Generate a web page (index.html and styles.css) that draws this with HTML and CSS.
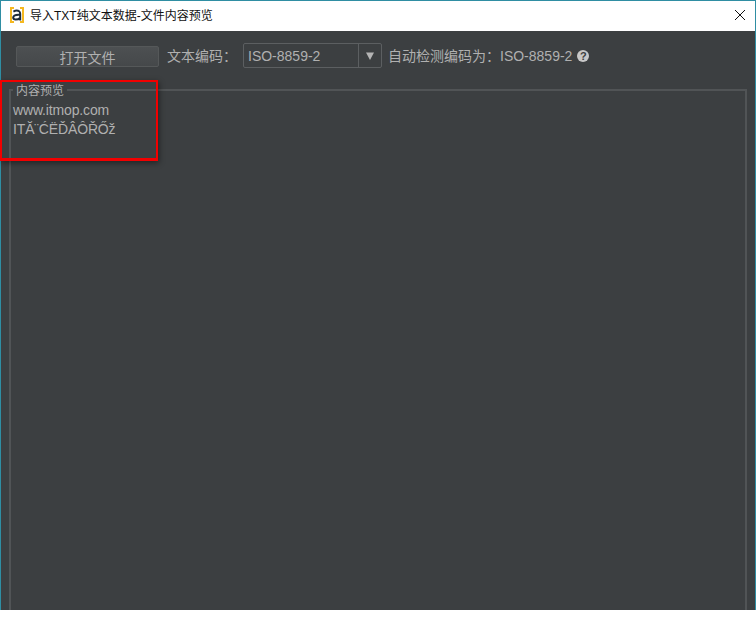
FILE: index.html
```html
<!DOCTYPE html>
<html lang="en">
<head>
    <meta charset="UTF-8">
    <title>导入TXT纯文本数据-文件内容预览</title>
    <link rel="stylesheet" href="styles.css">
</head>
<body>
    <div class="window">
        <div class="titlebar">
            <svg class="app-icon" width="14" height="16" viewBox="0 0 14 16">
                <path d="M0 0 H4 V2 H2 V14 H4 V16 H0 Z M14 0 H10 V2 H12 V14 H10 V16 H14 Z" fill="#f5b81f"/>
                <path d="M3.4 4.6 Q6.4 3 8.8 4 Q10.2 4.8 10.2 6.8 V13.4 M10 7.8 Q3.4 7.4 3.2 10.6 Q3.2 12.6 5.6 12.6 Q8.6 12.6 10 10.8" fill="none" stroke="#1d2b3a" stroke-width="2"/>
            </svg>
            <span class="title">导入TXT纯文本数据-文件内容预览</span>
            <svg class="close" width="12" height="12" viewBox="0 0 12 12">
                <path d="M1 1 L11 11 M11 1 L1 11" stroke="#111" stroke-width="1"/>
            </svg>
        </div>
        <div class="content">
            <div class="toolbar">
                <button class="open-button">打开文件</button>
                <span class="label">文本编码：</span>
                <div class="select">
                    <span class="select-value">ISO-8859-2</span>
                    <span class="select-arrow">
                        <svg width="8" height="8" viewBox="0 0 8 8"><path d="M0 0.5 H8 L4 8 Z" fill="#b4b4b4"/></svg>
                    </span>
                </div>
                <span class="detected">自动检测编码为：ISO-8859-2</span>
                <span class="help">?</span>
            </div>
            <div class="preview">
                <span class="preview-title">内容预览</span>
                <div class="preview-text">www.itmop.com<br>ITĂ¨ĆËĎÂÔŘŐž</div>
            </div>
        </div>
    </div>
    <div class="highlight"></div>
</body>
</html>
```

FILE: styles.css
```css
html, body {
    margin: 0;
    padding: 0;
    background-color: #fff;
}
body {
    font-family: "Liberation Sans", "Noto Sans CJK SC", sans-serif;
    position: relative;
    width: 756px;
    height: 634px;
    overflow: hidden;
}
.window {
    width: 756px;
    height: 610px;
    box-sizing: border-box;
    border: 1px solid #2f8ea3;
    border-bottom: none;
    display: flex;
    flex-direction: column;
}
.titlebar {
    height: 30px;
    box-sizing: border-box;
    flex: none;
    background-color: #fff;
    display: flex;
    align-items: center;
    padding: 0 9px 2px 9px;
}
.app-icon {
    flex: none;
}
.title {
    margin-left: 6px;
    margin-bottom: 2px;
    font-size: 12px;
    color: #111;
    flex: 1;
}
.content {
    flex: 1;
    background-color: #3c3f41;
    padding: 0 8px;
    display: flex;
    flex-direction: column;
    min-height: 0;
}
.toolbar {
    height: 49px;
    flex: none;
    display: flex;
    align-items: center;
    color: #b0b0b0;
    font-size: 14px;
    padding-left: 7px;
}
.open-button {
    width: 143px;
    height: 21px;
    margin-top: 2px;
    box-sizing: border-box;
    border: 1px solid #555859;
    border-radius: 2px;
    background: linear-gradient(#4d5052, #45484a);
    color: #b0b0b0;
    font-family: inherit;
    font-size: 14px;
    padding: 0 0 6px 0;
}
.label {
    margin-left: 8px;
    margin-bottom: 2px;
    width: 68px;
    white-space: nowrap;
}
.select {
    margin-left: 8px;
    width: 139px;
    height: 25px;
    box-sizing: border-box;
    border: 1px solid #5c5f61;
    border-radius: 2px;
    display: flex;
    align-items: center;
}
.select-value {
    flex: 1;
    padding-left: 4px;
}
.select-arrow {
    width: 22px;
    height: 23px;
    border-left: 1px solid #5c5f61;
    display: flex;
    align-items: center;
    justify-content: center;
}
.detected {
    margin-left: 6px;
    margin-bottom: 2px;
}
.help {
    margin-left: 5px;
    width: 12px;
    height: 12px;
    border-radius: 50%;
    background-color: #c8c8c8;
    color: #3c3f41;
    font-size: 11px;
    font-weight: bold;
    line-height: 12px;
    text-align: center;
}
.preview {
    flex: 1;
    position: relative;
    margin-top: 9px;
    box-sizing: border-box;
    border: 2px solid #515456;
    border-bottom: none;
    min-height: 0;
}
.preview-title {
    position: absolute;
    top: -8px;
    left: 2px;
    padding: 0 3px;
    background-color: #3c3f41;
    color: #b0b0b0;
    font-size: 12px;
    line-height: 16px;
}
.preview-text {
    padding: 10px 0 0 2px;
    color: #b0b0b0;
    font-size: 14px;
    letter-spacing: -0.15px;
    line-height: 19px;
}
.highlight {
    position: absolute;
    left: 0;
    top: 80px;
    width: 158px;
    height: 81px;
    box-sizing: border-box;
    border: 2px solid #f20000;
    border-bottom-width: 3px;
    box-shadow: 1px 2px 6px rgba(0, 0, 0, 0.45);
}
```
